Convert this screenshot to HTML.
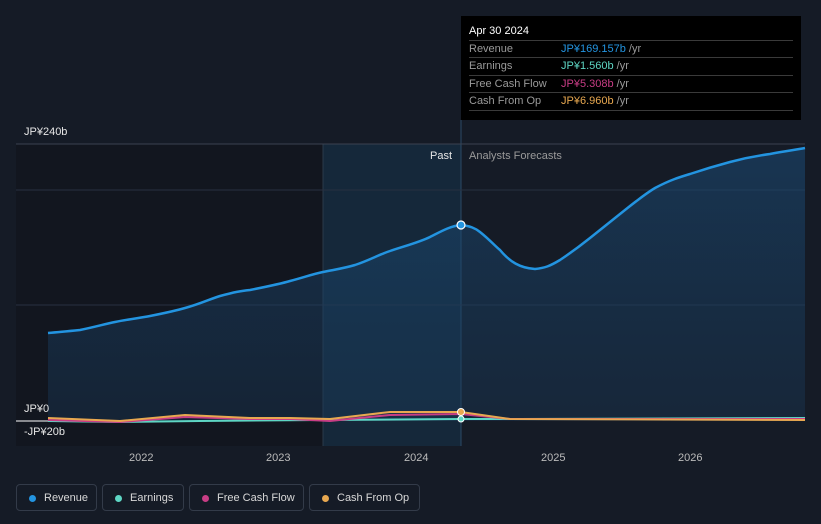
<!DOCTYPE html>
<html><head><meta charset="utf-8"><style>
body{margin:0;width:821px;height:524px;background:#151b26;font-family:"Liberation Sans","Noto Sans CJK JP",sans-serif;overflow:hidden;position:relative}
.t{position:absolute;font-size:11px;color:#e6e6e6}
.tip{position:absolute;left:461px;top:16px;width:340px;height:104px;background:#000;font-size:11px}
.tip div{position:absolute;left:8px;right:8px;height:17px;line-height:17px;color:#9a9a9a;border-top:1px solid #3a3a3a}
.tip span{position:absolute;left:92px}
.leg{position:absolute;top:484px;height:27px;border:1px solid #333b49;border-radius:4px;font-size:11px;color:#d8d8d8;line-height:27px;box-sizing:border-box;padding-left:27px}
.leg i{position:absolute;left:12px;top:10px;width:7px;height:7px;border-radius:50%}
</style></head><body>
<svg width="821" height="524" style="position:absolute;left:0;top:0">
<defs><linearGradient id="g" x1="0" x2="0" y1="0" y2="1"><stop offset="0" stop-color="#1a4d7a" stop-opacity=".7"/><stop offset="1" stop-color="#1a3a5a" stop-opacity=".5"/></linearGradient></defs>
<rect x="16" y="144" width="307" height="302" fill="#12161f"/>
<rect x="323" y="144" width="138" height="302" fill="#15283a"/>
<line x1="323" y1="144" x2="323" y2="446" stroke="#2a3a4a"/>
<line x1="461" y1="120" x2="461" y2="446" stroke="#2a4a66"/>
<line x1="16" y1="144" x2="805" y2="144" stroke="#3a4250"/>
<line x1="16" y1="190" x2="805" y2="190" stroke="#283040"/>
<line x1="16" y1="305" x2="805" y2="305" stroke="#283040"/>
<path d="M48,333 C60,332 70,331 80,330 C95,327 105,324 115,322 C130,319 140,318 150,316 C165,313 175,311 185,308 C200,304 210,299 220,296 C235,292 240,291 250,290 C265,287 280,284 290,281 C305,277 313,274 323,272 C338,269 345,268 355,265 C370,260 378,255 390,251 C405,246 420,242 430,237 C440,232 450,226 461,225 C470,226 475,228 480,232 C490,240 495,246 500,250 C510,262 520,268 535,269 C545,268 550,266 560,260 C575,250 580,246 590,238 C605,226 615,218 625,210 C635,202 645,194 655,188 C670,180 680,177 690,174 C705,169 715,166 730,162 C745,158 755,156 770,154 C785,151 795,150 805,148 L805,421 L48,421 Z" fill="url(#g)" opacity=".75"/>
<path d="M48,333 C60,332 70,331 80,330 C95,327 105,324 115,322 C130,319 140,318 150,316 C165,313 175,311 185,308 C200,304 210,299 220,296 C235,292 240,291 250,290 C265,287 280,284 290,281 C305,277 313,274 323,272 C338,269 345,268 355,265 C370,260 378,255 390,251 C405,246 420,242 430,237 C440,232 450,226 461,225 C470,226 475,228 480,232 C490,240 495,246 500,250 C510,262 520,268 535,269 C545,268 550,266 560,260 C575,250 580,246 590,238 C605,226 615,218 625,210 C635,202 645,194 655,188 C670,180 680,177 690,174 C705,169 715,166 730,162 C745,158 755,156 770,154 C785,151 795,150 805,148" fill="none" stroke="#2394e0" stroke-width="2.5"/>
<line x1="16" y1="421" x2="48" y2="421" stroke="#fff"/>
<path d="M48,421 L120,422 L200,421 L323,420 L461,419 L520,419 L805,418" fill="none" stroke="#5ed6c4" stroke-width="2"/>
<path d="M48,420 L120,422 L185,417 L250,419 L290,419 L330,421 L390,415 L461,414 L510,419 L805,419" fill="none" stroke="#c83d85" stroke-width="2"/>
<path d="M48,418 L120,421 L185,415 L250,418 L290,418 L330,419 L390,412 L461,412 L510,419 L805,420" fill="none" stroke="#e8a850" stroke-width="2"/>
<circle cx="461" cy="225" r="4" fill="#2394e0" stroke="#fff" stroke-width="1.2"/>
<circle cx="461" cy="412" r="3.5" fill="#e8a850" stroke="#fff"/>
<circle cx="461" cy="419" r="3" fill="#5ed6c4" stroke="#fff"/>
</svg>
<div class="t" style="left:24px;top:126px">JP¥240b</div>
<div class="t" style="left:24px;top:403px">JP¥0</div>
<div class="t" style="left:24px;top:426px">-JP¥20b</div>
<div class="t" style="left:430px;top:150px">Past</div>
<div class="t" style="left:469px;top:150px;color:#9a9a9a">Analysts Forecasts</div>
<div class="t" style="left:129px;top:452px;color:#bbb">2022</div>
<div class="t" style="left:266px;top:452px;color:#bbb">2023</div>
<div class="t" style="left:404px;top:452px;color:#bbb">2024</div>
<div class="t" style="left:541px;top:452px;color:#bbb">2025</div>
<div class="t" style="left:678px;top:452px;color:#bbb">2026</div>
<div class="tip">
<p style="position:absolute;left:8px;top:9px;margin:0;color:#fff">Apr 30 2024</p>
<div style="top:24px">Revenue<span><b style="font-weight:normal;color:#2394e0">JP¥169.157b</b> /yr</span></div>
<div style="top:41px">Earnings<span><b style="font-weight:normal;color:#5ed6c4">JP¥1.560b</b> /yr</span></div>
<div style="top:59px">Free Cash Flow<span><b style="font-weight:normal;color:#c83d85">JP¥5.308b</b> /yr</span></div>
<div style="top:76px;border-bottom:1px solid #3a3a3a">Cash From Op<span><b style="font-weight:normal;color:#e8a850">JP¥6.960b</b> /yr</span></div>
</div>
<div class="leg" style="left:16px;width:81px"><i style="background:#2394e0"></i>Revenue</div>
<div class="leg" style="left:102px;width:82px"><i style="background:#5ed6c4"></i>Earnings</div>
<div class="leg" style="left:189px;width:115px"><i style="background:#c83d85"></i>Free Cash Flow</div>
<div class="leg" style="left:309px;width:111px"><i style="background:#e8a850"></i>Cash From Op</div>
</body></html>
